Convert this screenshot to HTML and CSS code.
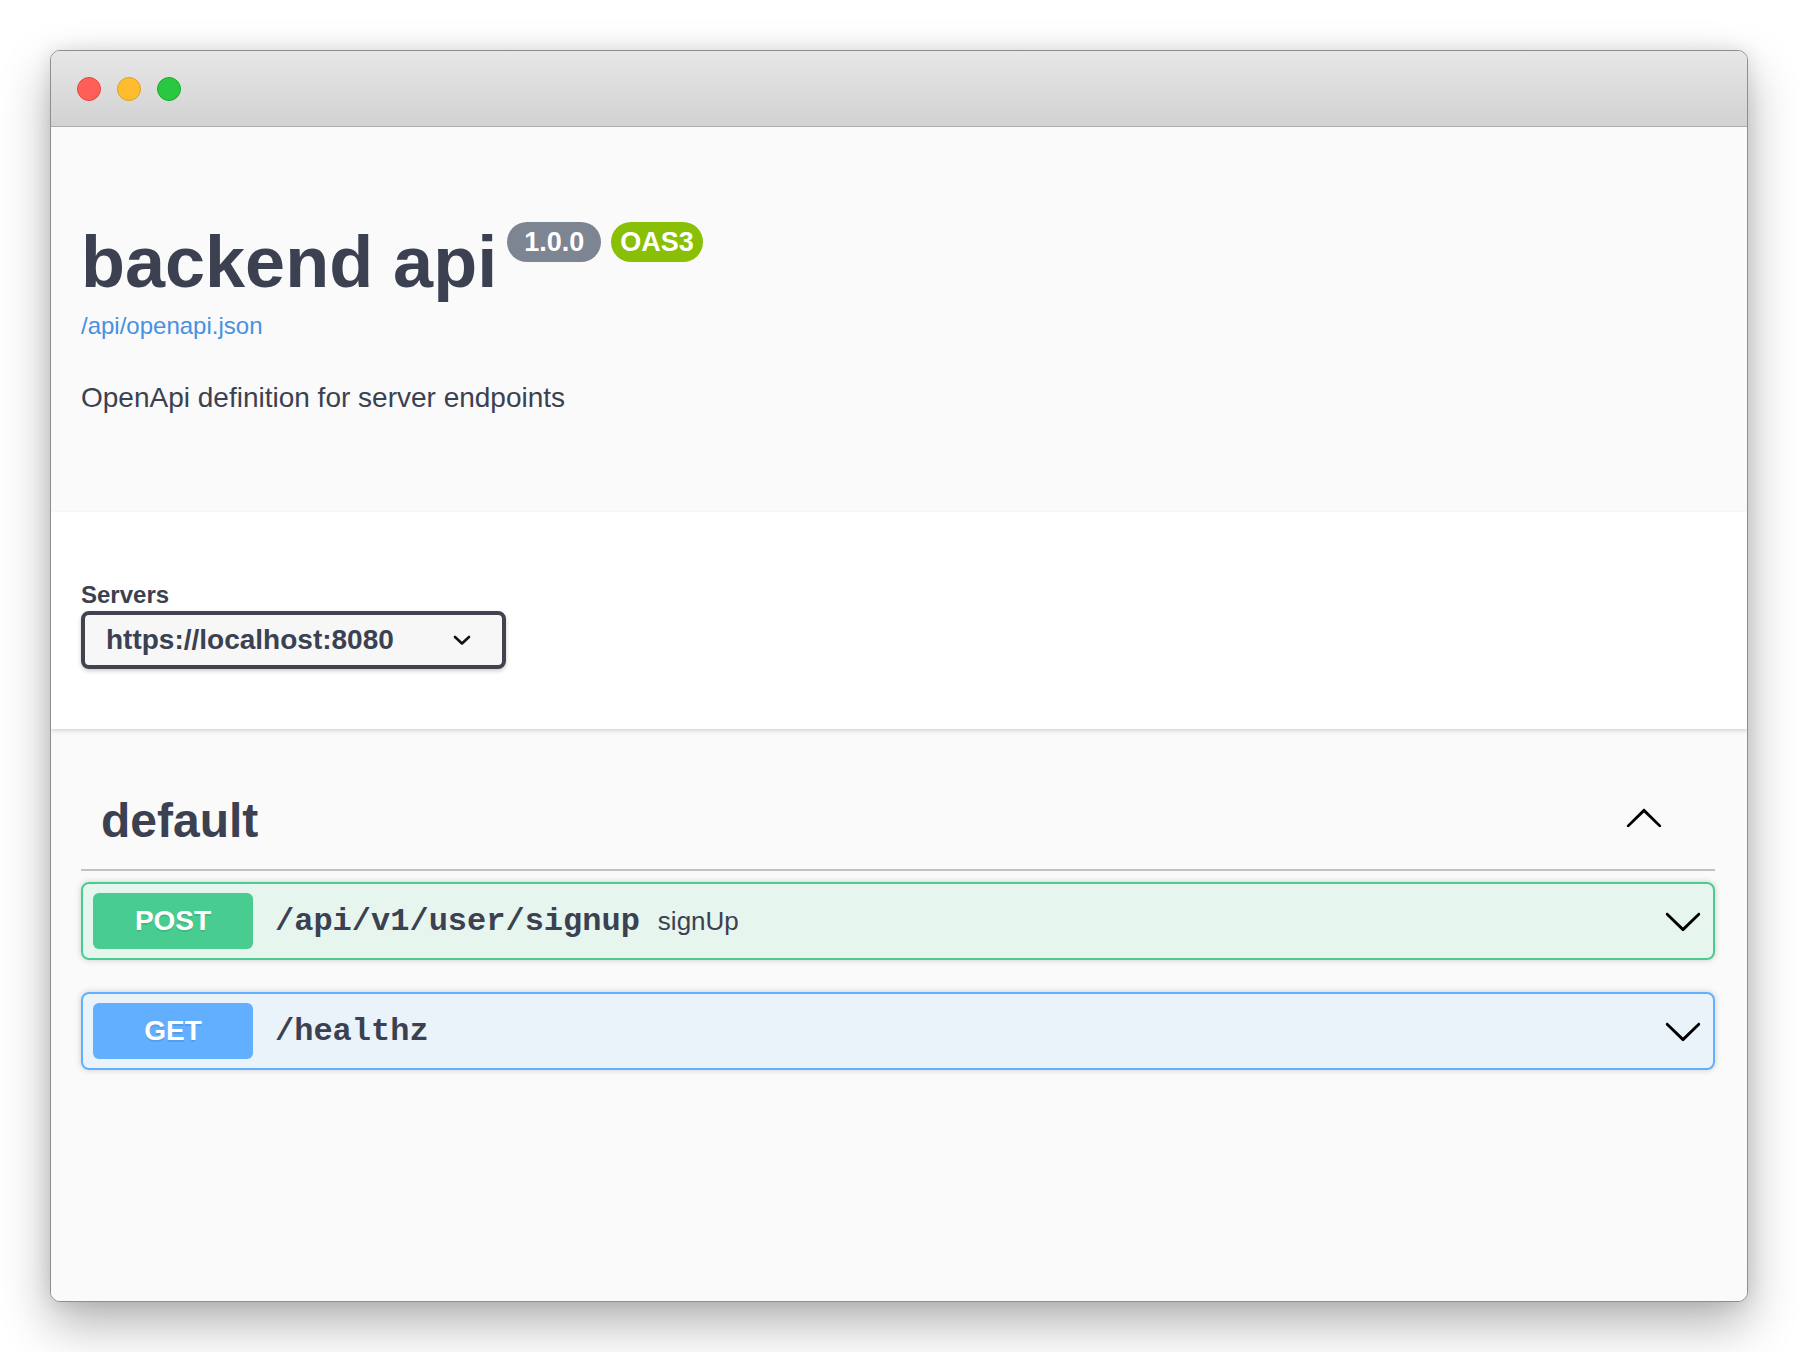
FILE: index.html
```html
<!DOCTYPE html>
<html lang="en">
<head>
<meta charset="utf-8">
<title>Swagger UI</title>
<link rel="stylesheet" href="styles.css">
</head>
<body>
<div class="window">
  <div class="titlebar">
    <span class="light light-red"></span>
    <span class="light light-yellow"></span>
    <span class="light light-green"></span>
  </div>
  <div class="page">
    <section class="info">
      <div class="title-row">
        <h1 class="title">backend api</h1>
        <span class="badge badge-version">1.0.0</span>
        <span class="badge badge-oas">OAS3</span>
      </div>
      <a class="spec-link" href="#">/api/openapi.json</a>
      <p class="description">OpenApi definition for server endpoints</p>
    </section>

    <section class="scheme">
      <div class="servers">
        <span class="servers-label">Servers</span>
        <div class="select">
          <span class="select-value">https://localhost:8080</span>
          <svg class="select-arrow" width="18" height="12" viewBox="0 0 18 12"><polyline points="2,3 9,9.5 16,3" fill="none" stroke="#111" stroke-width="2.6" stroke-linecap="round" stroke-linejoin="round"/></svg>
        </div>
      </div>
    </section>

    <section class="tags">
      <div class="tag-header">
        <h3 class="tag-name">default</h3>
        <svg class="arrow tag-arrow" width="40" height="40" viewBox="0 0 20 20"><path d="M17.418 14.908c.272.268.709.268.979 0s.271-.701 0-.969l-7.908-7.83c-.27-.268-.707-.268-.979 0l-7.908 7.83c-.27.268-.27.701 0 .969.271.268.709.268.979 0L10 7.767l7.418 7.141z"/></svg>
      </div>

      <div class="opblock opblock-post">
        <span class="method method-post">POST</span>
        <span class="path">/api/v1/user/signup</span>
        <span class="summary">signUp</span>
        <svg class="arrow op-arrow" width="40" height="40" viewBox="0 0 20 20"><path d="M17.418 6.109c.272-.268.709-.268.979 0s.271.701 0 .969l-7.908 7.83c-.27.268-.707.268-.979 0l-7.908-7.83c-.27-.268-.27-.701 0-.969.271-.268.709-.268.979 0L10 13.25l7.418-7.141z"/></svg>
      </div>

      <div class="opblock opblock-get">
        <span class="method method-get">GET</span>
        <span class="path">/healthz</span>
        <svg class="arrow op-arrow" width="40" height="40" viewBox="0 0 20 20"><path d="M17.418 6.109c.272-.268.709-.268.979 0s.271.701 0 .969l-7.908 7.83c-.27.268-.707.268-.979 0l-7.908-7.830c-.27-.268-.27-.701 0-.969.271-.268.709-.268.979 0L10 13.25l7.418-7.141z"/></svg>
      </div>
    </section>
  </div>
</div>
</body>
</html>
```

FILE: styles.css
```css
html, body {
  margin: 0;
}

body {
  padding: 50px;
  background: #ffffff;
  font-family: "Liberation Sans", Arial, Helvetica, sans-serif;
  color: #3b4151;
}

.window {
  height: 1252px;
  box-sizing: border-box;
  border: 1px solid #8e8e8e;
  border-radius: 10px;
  overflow: hidden;
  display: flex;
  flex-direction: column;
  background: #fafafa;
  box-shadow: 0 22px 50px rgba(0, 0, 0, 0.30), 0 0 18px rgba(0, 0, 0, 0.10);
}

.titlebar {
  flex: none;
  height: 75px;
  background: linear-gradient(#e7e7e7, #d2d2d2);
  border-bottom: 1px solid #adadad;
  display: flex;
  align-items: center;
  gap: 16px;
  padding-left: 26px;
}

.light {
  width: 24px;
  height: 24px;
  border-radius: 50%;
  box-sizing: border-box;
}

.light-red {
  background: #ff5f57;
  border: 1px solid #e2463f;
}

.light-yellow {
  background: #febc2e;
  border: 1px solid #dea123;
}

.light-green {
  background: #28c840;
  border: 1px solid #1aab29;
}

.page {
  flex: 1;
  background: #fafafa;
}

/* info */
.info {
  padding: 95px 30px 94px;
}

.title-row {
  display: flex;
  align-items: flex-start;
}

.title {
  margin: 0;
  font-size: 72px;
  line-height: 80px;
  font-weight: 700;
  color: #3b4151;
}

.badge {
  height: 40px;
  line-height: 40px;
  border-radius: 20px;
  color: #ffffff;
  font-weight: 700;
  font-size: 27px;
}

.badge-version {
  margin-left: 10px;
  padding: 0 17px;
  background: #7d8492;
}

.badge-oas {
  margin-left: 10px;
  padding: 0 9px;
  background: #89bf04;
}

.spec-link {
  display: block;
  margin-top: 10px;
  font-size: 24px;
  line-height: 28px;
  color: #4990e2;
  text-decoration: none;
}

.description {
  margin: 38px 0 0;
  font-size: 28px;
  line-height: 40px;
}

/* servers */
.scheme {
  background: #ffffff;
  padding: 69px 30px 60px;
  box-shadow: 0 2px 4px rgba(0, 0, 0, 0.15);
}

.servers {
  display: flex;
  flex-direction: column;
  align-items: flex-start;
}

.servers-label {
  font-size: 24px;
  line-height: 28px;
  font-weight: 700;
  margin-bottom: 2px;
}

.select {
  width: 425px;
  height: 58px;
  box-sizing: border-box;
  border: 4px solid #41444e;
  border-radius: 8px;
  background: #f7f7f7;
  box-shadow: 0 2px 4px rgba(0, 0, 0, 0.2);
  display: flex;
  align-items: center;
  justify-content: space-between;
  padding: 0 31px 0 21px;
  font-size: 28px;
  font-weight: 700;
}

.select-arrow {
  display: block;
}

/* tags */
.tags {
  padding: 44px 32px 0 30px;
}

.tag-header {
  display: flex;
  align-items: center;
  justify-content: space-between;
  padding: 20px 51px 20px 20px;
  border-bottom: 2px solid rgba(59, 65, 81, 0.3);
  margin-bottom: 11px;
}

.tag-name {
  margin: 0;
  font-size: 48px;
  line-height: 56px;
  font-weight: 700;
}

.arrow {
  display: block;
  flex: none;
  fill: #000000;
}

.tag-arrow {
  margin-bottom: 9px;
}

.opblock {
  display: flex;
  align-items: center;
  padding: 9px 10px;
  border: 2px solid;
  border-radius: 8px;
  margin-bottom: 32px;
  box-shadow: 0 0 6px rgba(0, 0, 0, 0.19);
}

.opblock-post {
  border-color: #49cc90;
  background: rgba(73, 204, 144, 0.1);
}

.opblock-get {
  border-color: #61affe;
  background: rgba(97, 175, 254, 0.1);
}

.method {
  width: 160px;
  height: 56px;
  flex: none;
  border-radius: 6px;
  display: flex;
  align-items: center;
  justify-content: center;
  font-size: 28px;
  font-weight: 700;
  color: #ffffff;
  text-shadow: 0 2px 0 rgba(0, 0, 0, 0.1);
}

.method-post {
  background: #49cc90;
}

.method-get {
  background: #61affe;
}

.path {
  padding: 0 18px 0 22px;
  font-family: "Liberation Mono", "Courier New", monospace;
  font-weight: 700;
  font-size: 32px;
  color: #3b4151;
}

.summary {
  font-size: 26px;
  color: #3b4151;
}

.op-arrow {
  margin-left: auto;
}
```
